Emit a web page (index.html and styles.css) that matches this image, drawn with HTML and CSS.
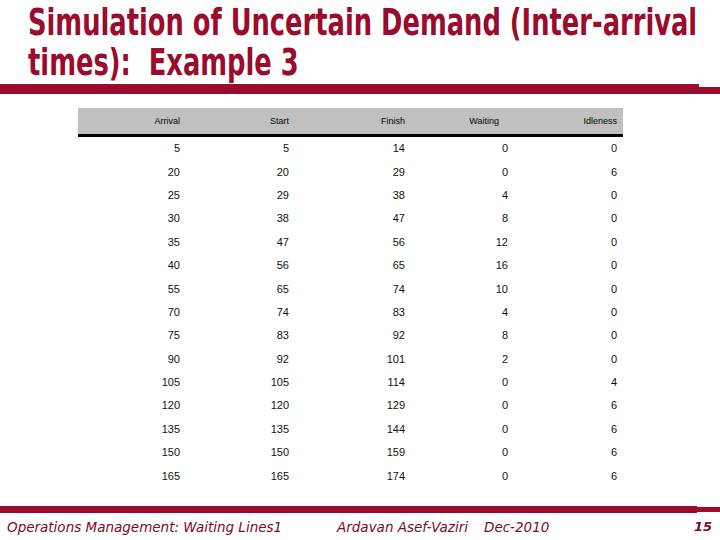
FILE: index.html
```html
<!DOCTYPE html>
<html>
<head>
<meta charset="utf-8">
<link rel="stylesheet" href="styles.css">
</head>
<body>
<div class="slide">
  <h1 class="title"><span class="line">Simulation of Uncertain Demand (Inter-arrival</span><span class="line">times):&nbsp; Example 3</span></h1>
  <div class="rule top-rule"><span class="thick"></span><span class="thin"></span></div>
  <table class="data">
    <thead>
      <tr><th>Arrival</th><th>Start</th><th>Finish</th><th class="wait">Waiting</th><th>Idleness</th></tr>
    </thead>
    <tbody>
      <tr><td>5</td><td>5</td><td>14</td><td>0</td><td>0</td></tr>
      <tr><td>20</td><td>20</td><td>29</td><td>0</td><td>6</td></tr>
      <tr><td>25</td><td>29</td><td>38</td><td>4</td><td>0</td></tr>
      <tr><td>30</td><td>38</td><td>47</td><td>8</td><td>0</td></tr>
      <tr><td>35</td><td>47</td><td>56</td><td>12</td><td>0</td></tr>
      <tr><td>40</td><td>56</td><td>65</td><td>16</td><td>0</td></tr>
      <tr><td>55</td><td>65</td><td>74</td><td>10</td><td>0</td></tr>
      <tr><td>70</td><td>74</td><td>83</td><td>4</td><td>0</td></tr>
      <tr><td>75</td><td>83</td><td>92</td><td>8</td><td>0</td></tr>
      <tr><td>90</td><td>92</td><td>101</td><td>2</td><td>0</td></tr>
      <tr><td>105</td><td>105</td><td>114</td><td>0</td><td>4</td></tr>
      <tr><td>120</td><td>120</td><td>129</td><td>0</td><td>6</td></tr>
      <tr><td>135</td><td>135</td><td>144</td><td>0</td><td>6</td></tr>
      <tr><td>150</td><td>150</td><td>159</td><td>0</td><td>6</td></tr>
      <tr><td>165</td><td>165</td><td>174</td><td>0</td><td>6</td></tr>
    </tbody>
  </table>
  <div class="rule bottom-rule"><span class="thick"></span><span class="thin"></span></div>
  <div class="footer">
    <span class="course">Operations Management: Waiting Lines1</span>
    <span class="author">Ardavan Asef-Vaziri</span>
    <span class="date">Dec-2010</span>
    <span class="page">15</span>
  </div>
</div>
</body>
</html>
```
FILE: styles.css
```css
html, body {
  margin: 0;
  padding: 0;
  background: #ffffff;
}
.slide {
  width: 720px;
  height: 540px;
  display: flex;
  flex-direction: column;
  overflow: hidden;
}
.title {
  margin: 0 0 0 28px;
  padding: 2px 0 0 0;
  font-family: "DejaVu Sans Condensed", "Liberation Sans Narrow", sans-serif;
  font-weight: bold;
  font-size: 38px;
  line-height: 40px;
  color: #9a0b2c;
  transform: scaleX(0.753);
  transform-origin: 0 0;
  white-space: nowrap;
  width: max-content;
  height: 78px;
}
.title .line {
  display: block;
}
.rule {
  display: flex;
  align-items: center;
}
.rule .thick {
  background: #9a0b2c;
}
.rule .thin {
  flex: 1;
  background: #9a0b2c;
}
.top-rule {
  margin-top: 4px;
  height: 10px;
}
.top-rule .thick {
  width: 699px;
  height: 10px;
}
.top-rule .thin {
  height: 7px;
  margin-top: 2px;
}
.data {
  margin: 14px 0 0 78px;
  width: 545px;
  border-collapse: collapse;
  table-layout: fixed;
  font-family: "Liberation Sans", Arial, sans-serif;
}
.data th {
  background: #c0c0c0;
  height: 27px;
  padding: 0 7px 0 0;
  text-align: right;
  font-weight: normal;
  font-size: 9px;
  color: #000;
  border-bottom: 3px solid #000;
  vertical-align: middle;
  box-sizing: border-box;
}
.data td {
  height: 23.4px;
  padding: 0 7px 0 0;
  text-align: right;
  font-size: 11px;
  color: #111;
  vertical-align: middle;
}
.data th:nth-child(3), .data td:nth-child(3) { padding-right: 0; }
.data td:nth-child(4) { padding-right: 6px; }
.data th.wait { padding-right: 15px; }
.data th:nth-child(5), .data td:nth-child(5) { padding-right: 6px; }
.bottom-rule {
  margin-top: auto;
  height: 7px;
}
.bottom-rule .thick {
  width: 697px;
  height: 7px;
}
.bottom-rule .thin {
  height: 5px;
}
.footer {
  display: flex;
  align-items: center;
  height: 27px;
  padding: 0 8px 0 7px;
  font-family: "DejaVu Sans", Verdana, sans-serif;
  font-style: italic;
  font-size: 13.5px;
  color: #7a0a2a;
}
.course { width: 330px; }
.author { width: 147px; }
.date { flex: 1; }
.page { font-weight: bold; font-size: 13px; }
```
